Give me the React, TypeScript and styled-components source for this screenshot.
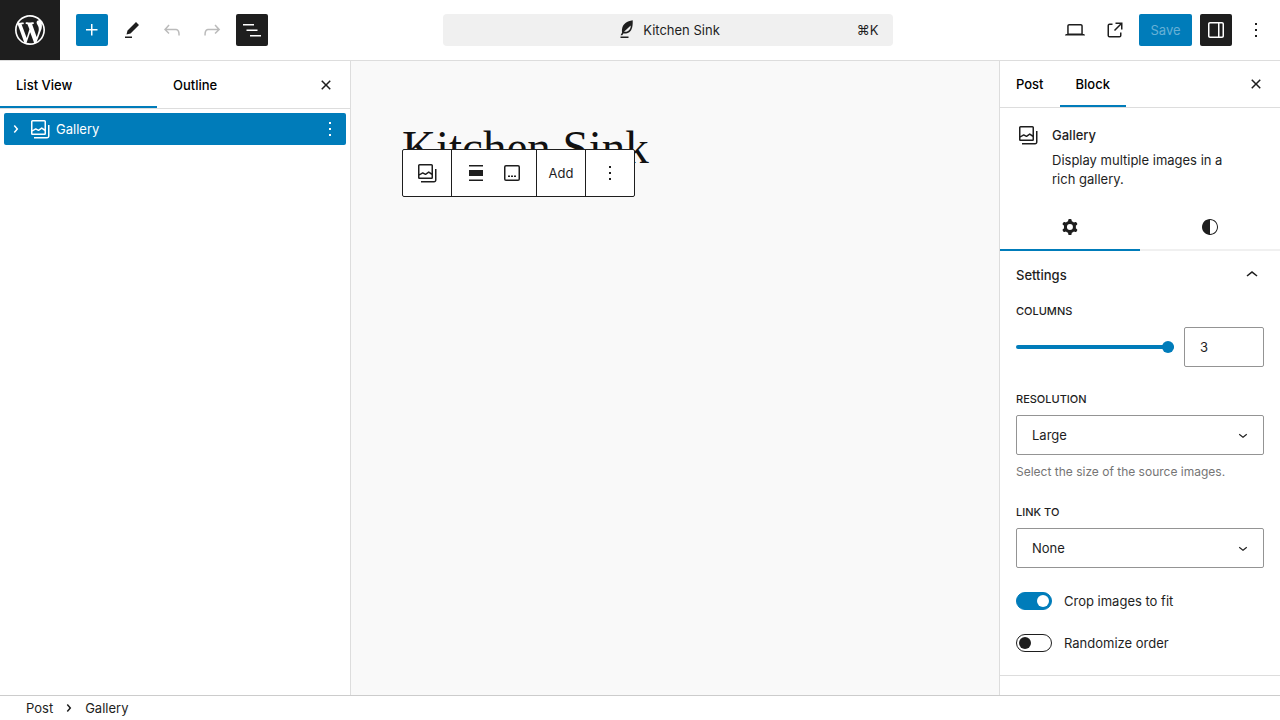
import React from "react";
import styled, { createGlobalStyle } from "styled-components";

const blue = "#007cba";
const ink = "#1e1e1e";

const GlobalStyle = createGlobalStyle`
  *, *::before, *::after { box-sizing: border-box; }
  body {
    margin: 0;
    font: 13px/20px Inter, "Liberation Sans", sans-serif;
    color: ${ink};
    background: #fff;
  }
  button, input, select { font: inherit; color: inherit; margin: 0; }
  h1, h2, p, ol { margin: 0; padding: 0; }
`;

const paths = {
  plus: "M11 12.5V17.5H12.5V12.5H17.5V11H12.5V6H11V11H6V12.5H11Z",
  edit: "m19 7-3-3-8.5 8.5-1 4 4-1L19 7Zm-7 11.5H5V20h7v-1.5Z",
  undo: "M18.3 11.7c-.6-.6-1.4-.9-2.3-.9H6.7l2.9-3.3-1.1-1-4.5 5L8.5 16l1-1-2.7-2.7H16c.5 0 .9.2 1.3.5 1 1 1 3.4 1 4.5v.3h1.5v-.2c0-1.5 0-4.3-1.5-5.7z",
  redo: "M15.6 6.5l-1.1 1 2.9 3.3H8c-.9 0-1.7.3-2.3.9-1.4 1.5-1.4 4.2-1.4 5.6v.2h1.5v-.3c0-1.1 0-3.5 1-4.5.3-.3.7-.5 1.3-.5h9.2L14.5 15l1.1 1.1 4.6-4.6-4.6-5z",
  listView: "M3 6h11v1.5H3V6Zm3.5 5.5h11V13h-11v-1.5ZM21 17H10v1.5h11V17Z",
  close: "M12 13.06l3.712 3.713 1.061-1.06L13.061 12l3.712-3.712-1.06-1.06L12 10.938 8.288 7.227l-1.061 1.06L10.939 12l-3.712 3.712 1.06 1.061L12 13.061z",
  chevronRight: "M10.8622 8.04053L14.2805 12.0286L10.8622 16.0167L9.72327 15.0405L12.3049 12.0286L9.72327 9.01672L10.8622 8.04053Z",
  chevronUp: "M6.5 12.4L12 8l5.5 4.4-.9 1.2L12 10l-4.5 3.6-1-1.2z",
  chevronDown: "M17.5 11.6L12 16l-5.5-4.4.9-1.2L12 14l4.5-3.6 1 1.2z",
  gallery: "M16.375 4.5H4.625a.125.125 0 0 0-.125.125v8.254l2.859-1.54a.75.75 0 0 1 .68-.016l2.384 1.142 2.89-2.074a.75.75 0 0 1 .874 0l2.313 1.66V4.625a.125.125 0 0 0-.125-.125Zm.125 9.398-2.75-1.975-2.813 2.02a.75.75 0 0 1-.76.067l-2.444-1.17L4.5 14.583v1.792c0 .069.056.125.125.125h11.75a.125.125 0 0 0 .125-.125v-2.477ZM4.625 3C3.728 3 3 3.728 3 4.625v11.75C3 17.273 3.728 18 4.625 18h11.75c.898 0 1.625-.727 1.625-1.625V4.625C18 3.728 17.273 3 16.375 3H4.625ZM20 8v11c0 .69-.31 1-.999 1H6v1.5h13.001c1.52 0 2.499-.982 2.499-2.5V8H20Z",
  more: "M13 19h-2v-2h2v2zm0-6h-2v-2h2v2zm0-6h-2V5h2v2z",
  align: "M19 5.5H5V4h14v1.5ZM19 20H5v-1.5h14V20ZM5 9h14v6H5V9Z",
  caption: "M6 5.5h12a.5.5 0 0 1 .5.5v12a.5.5 0 0 1-.5.5H6a.5.5 0 0 1-.5-.5V6a.5.5 0 0 1 .5-.5ZM4 6a2 2 0 0 1 2-2h12a2 2 0 0 1 2 2v12a2 2 0 0 1-2 2H6a2 2 0 0 1-2-2V6Zm4 10h2v-1.5H8V16Zm5 0h-2v-1.5h2V16Zm1 0h2v-1.5h-2V16Z",
  laptop: "M20.5 16h-.7V8c0-1.1-.9-2-2-2H6.2c-1.1 0-2 .9-2 2v8h-.7c-.8 0-1.5.7-1.5 1.5h20c0-.8-.7-1.5-1.5-1.5zM5.7 8c0-.3.2-.5.5-.5h11.6c.3 0 .5.2.5.5v7.6H5.7V8z",
  external: "M19.5 4.5h-7V6h4.44l-5.97 5.97 1.06 1.06L18 7.06v4.44h1.5v-7Zm-13 1a2 2 0 0 0-2 2v10a2 2 0 0 0 2 2h10a2 2 0 0 0 2-2v-3H17v3a.5.5 0 0 1-.5.5h-10a.5.5 0 0 1-.5-.5v-10a.5.5 0 0 1 .5-.5h3V5.5h-3Z",
  drawer: "M18 4H6c-1.1 0-2 .9-2 2v12c0 1.1.9 2 2 2h12c1.1 0 2-.9 2-2V6c0-1.1-.9-2-2-2zm-4 14.5H6c-.3 0-.5-.2-.5-.5V6c0-.3.2-.5.5-.5h8v13zm4.5-.5c0 .3-.2.5-.5.5h-2.5v-13H18c.3 0 .5.2.5.5v12z",
  cog: "M10.289 4.836A1 1 0 0111.275 4h1.306a1 1 0 01.987.836l.244 1.466c.787.26 1.503.679 2.108 1.218l1.393-.522a1 1 0 011.216.437l.653 1.13a1 1 0 01-.23 1.273l-1.148.944a6.025 6.025 0 010 2.435l1.149.946a1 1 0 01.23 1.272l-.653 1.13a1 1 0 01-1.216.437l-1.394-.522c-.605.54-1.32.958-2.108 1.218l-.244 1.466a1 1 0 01-.987.836h-1.306a1 1 0 01-.986-.836l-.244-1.466a5.995 5.995 0 01-2.108-1.218l-1.394.522a1 1 0 01-1.217-.436l-.653-1.131a1 1 0 01.23-1.272l1.149-.946a6.026 6.026 0 010-2.435l-1.148-.944a1 1 0 01-.23-1.272l.653-1.131a1 1 0 011.217-.437l1.393.522a5.994 5.994 0 012.108-1.218l.244-1.466zM14.929 12a3 3 0 11-6 0 3 3 0 016 0z",
  styles: "M12 4c-4.4 0-8 3.6-8 8v.1c0 4.1 3.2 7.5 7.2 7.9h.8c4.4 0 8-3.6 8-8s-3.6-8-8-8zm0 15V5c3.900 0 7 3.100 7 7s-3.100 7-7 7z",
  quill: "M17.7 2.2C12 3 7.8 5.6 7 11.2c-.2 1.200-.1 2.300.1 3.200L5.600 17.300h1.700l1-1.900c1.800.3 4.300.1 6-1.200 3-2.300 3.600-6.700 3.400-12zM9 13.800l6.700-6.200c.2 2.300-.9 4.400-2.600 5.300-1.200.7-2.600 1-4.100.9zM5.500 18.500h8V20h-8z",
  wordpress: "M20 10c0-5.51-4.49-10-10-10C4.48 0 0 4.49 0 10c0 5.52 4.48 10 10 10 5.51 0 10-4.48 10-10zM7.78 15.37L4.37 6.22c.55-.02 1.17-.08 1.17-.08.5-.06.44-1.13-.06-1.11 0 0-1.45.11-2.37.11-.18 0-.37 0-.58-.01C4.12 2.69 6.87 1.11 10 1.11c2.33 0 4.45.87 6.05 2.34-.68-.11-1.65.39-1.65 1.58 0 .74.45 1.36.9 2.1.35.61.55 1.36.55 2.46 0 1.49-1.4 5-1.4 5l-3.03-8.37c.54-.02.82-.17.82-.17.5-.05.44-1.25-.06-1.22 0 0-1.44.12-2.38.12-.87 0-2.33-.12-2.33-.12-.5-.03-.56 1.2-.06 1.22l.92.08 1.26 3.41zM17.41 10c.24-.64.74-1.87.43-4.25.7 1.29 1.05 2.71 1.05 4.25 0 3.29-1.73 6.24-4.4 7.78.97-2.59 1.94-5.2 2.92-7.78zM6.1 18.09C3.12 16.65 1.11 13.53 1.11 10c0-1.3.23-2.48.72-3.59C3.25 10.3 4.67 14.2 6.1 18.09zm4.03-6.63l2.58 6.98c-.86.29-1.76.45-2.71.45-.79 0-1.57-.11-2.29-.33.81-2.38 1.62-4.74 2.42-7.1z",
};

const Svg = styled.svg`
  display: block;
  flex: none;
  fill: currentColor;
`;

function Icon({ name, size = 24, viewBox = "0 0 24 24" }: { name: keyof typeof paths; size?: number; viewBox?: string }) {
  return (
    <Svg width={size} height={size} viewBox={viewBox} aria-hidden="true">
      <path fillRule="evenodd" clipRule="evenodd" d={paths[name]} />
    </Svg>
  );
}

const Page = styled.div`
  display: flex;
  flex-direction: column;
  min-height: 100vh;
`;

const Header = styled.header`
  display: grid;
  grid-template-columns: auto minmax(0, 1fr) auto;
  align-items: center;
  height: 61px;
  border-bottom: 1px solid #ddd;
`;

const Tools = styled.div`
  display: flex;
  align-items: center;
  gap: 8px;
  padding-right: 8px;
`;

const HomeLink = styled.a`
  display: grid;
  place-items: center;
  width: 60px;
  height: 60px;
  margin-right: 8px;
  background: ${ink};
  color: #fff;
`;

const IconButton = styled.button<{ $fill?: string }>`
  display: grid;
  place-items: center;
  flex: none;
  width: 32px;
  height: 32px;
  padding: 0;
  border: 0;
  border-radius: 2px;
  background: ${(p) => p.$fill ?? "transparent"};
  color: ${(p) => (p.$fill ? "#fff" : "inherit")};
  &:disabled { color: #bbb; }
`;

const SaveButton = styled.button`
  width: 53px;
  height: 32px;
  padding: 0;
  border: 0;
  border-radius: 2px;
  background: ${blue};
  &:disabled { color: #66b0d6; }
`;

const CommandBar = styled.button`
  display: grid;
  grid-template-columns: 1fr auto 1fr;
  align-items: center;
  justify-self: center;
  width: 100%;
  max-width: 450px;
  height: 32px;
  padding: 0 14px;
  border: 0;
  border-radius: 4px;
  background: #f0f0f0;
`;

const DocumentName = styled.span`
  grid-column: 2;
  display: flex;
  align-items: center;
  gap: 4px;
`;

const Shortcut = styled.kbd`
  font-family: inherit;
  text-align: right;
`;

const Workspace = styled.div`
  display: flex;
  flex: 1;
`;

const ListPanel = styled.aside`
  flex: none;
  width: 351px;
  border-right: 1px solid #ddd;
`;

const Inspector = styled.aside`
  flex: none;
  width: 281px;
  border-left: 1px solid #ddd;
`;

const TabBar = styled.div<{ $height: number }>`
  display: flex;
  align-items: center;
  height: ${(p) => p.$height}px;
  padding-right: 8px;
  border-bottom: 1px solid #ddd;
`;

const Tab = styled.button<{ $active?: boolean; $width?: string }>`
  align-self: stretch;
  width: ${(p) => p.$width ?? "auto"};
  padding: 0 16px;
  border: 0;
  background: none;
  box-shadow: ${(p) => (p.$active ? `inset 0 -2px ${blue}` : "none")};
  font-weight: 500;
  text-align: left;
  color: #000;
`;

const Spacer = styled.div`
  flex: 1;
`;

const BlockRow = styled.div`
  display: flex;
  align-items: center;
  height: 32px;
  margin: 4px;
  border-radius: 2px;
  background: ${blue};
  color: #fff;
`;

const BlockName = styled.button`
  display: flex;
  align-items: center;
  flex: 1;
  gap: 4px;
  padding: 0;
  border: 0;
  background: none;
`;

const Canvas = styled.main`
  flex: 1;
  min-width: 0;
  padding: 52px 51px;
  background: #f9f9f9;
`;

const TitleArea = styled.div`
  position: relative;
`;

const PostTitle = styled.h1`
  font: 400 47px/68px "Liberation Serif", serif;
  color: #111;
`;

const BlockToolbar = styled.div`
  position: absolute;
  top: 36px;
  left: 0;
  display: flex;
  height: 48px;
  border: 1px solid ${ink};
  border-radius: 2px;
  background: #fff;
`;

const ToolGroup = styled.div`
  display: flex;
  padding: 0 6px;
  & + & { border-left: 1px solid ${ink}; }
`;

const ToolButton = styled.button`
  display: grid;
  place-items: center;
  width: 36px;
  padding: 0;
  border: 0;
  background: none;
`;

const BlockCard = styled.section`
  display: flex;
  gap: 12px;
  padding: 15px 16px 0;
`;

const CardTitle = styled.h2`
  font-size: 13px;
  font-weight: 500;
  line-height: 24px;
`;

const CardText = styled.p`
  max-width: 184px;
  line-height: 19px;
  padding-top: 4px;
`;

const ViewTabs = styled.div`
  display: grid;
  grid-template-columns: 1fr 1fr;
  height: 48px;
  margin-top: 14px;
  box-shadow: inset 0 -2px #f0f0f0;
`;

const ViewTab = styled.button<{ $active?: boolean }>`
  display: grid;
  place-items: center;
  padding: 0;
  border: 0;
  background: none;
  box-shadow: ${(p) => (p.$active ? `inset 0 -2px ${blue}` : "none")};
`;

const Panel = styled.section`
  padding: 0 16px 23px;
  border-bottom: 1px solid #ddd;
`;

const PanelToggle = styled.button`
  display: flex;
  align-items: center;
  justify-content: space-between;
  width: 100%;
  height: 48px;
  margin-bottom: 4px;
  padding: 0;
  border: 0;
  background: none;
  font-weight: 500;
`;

const Field = styled.div`
  display: flex;
  flex-direction: column;
  gap: 8px;
  margin-bottom: 24px;
`;

const Label = styled.label`
  padding-top: 1px;
  font-size: 11px;
  font-weight: 500;
  line-height: 15px;
  text-transform: uppercase;
`;

const Hint = styled.p`
  font-size: 12px;
  line-height: 17px;
  color: #757575;
`;

const RangeRow = styled.div`
  display: flex;
  align-items: center;
  gap: 10px;
`;

const Range = styled.input`
  flex: 1;
  min-width: 0;
  height: 12px;
  appearance: none;
  background: none;
  &::-webkit-slider-runnable-track {
    height: 4px;
    border-radius: 2px;
    background: ${blue};
  }
  &::-webkit-slider-thumb {
    appearance: none;
    width: 12px;
    height: 12px;
    margin-top: -4px;
    border-radius: 50%;
    background: ${blue};
  }
`;

const NumberBox = styled.input`
  width: 80px;
  height: 40px;
  padding: 0 15px;
  border: 1px solid #949494;
  border-radius: 2px;
  background: #fff;
`;

const SelectWrap = styled.div`
  display: grid;
  align-items: center;
  & > * { grid-area: 1 / 1; }
  & > svg {
    justify-self: end;
    margin-right: 12px;
    pointer-events: none;
  }
`;

const Select = styled.select`
  width: 100%;
  height: 40px;
  padding: 0 15px;
  appearance: none;
  border: 1px solid #949494;
  border-radius: 2px;
  background: #fff;
`;

const SwitchRow = styled.label`
  display: flex;
  align-items: center;
  gap: 12px;
  height: 18px;
  & + & { margin-top: 24px; }
`;

const Switch = styled.input`
  flex: none;
  display: flex;
  align-items: center;
  width: 36px;
  height: 18px;
  padding: 0 2px;
  appearance: none;
  border: 1px solid ${ink};
  border-radius: 9px;
  background: #fff;
  &::before {
    content: "";
    width: 12px;
    height: 12px;
    border-radius: 50%;
    background: ${ink};
  }
  &:checked {
    justify-content: flex-end;
    border-color: ${blue};
    background: ${blue};
  }
  &:checked::before { background: #fff; }
`;

const Footer = styled.footer`
  height: 25px;
  padding: 0 18px;
  border-top: 1px solid #ccc;
`;

const Crumbs = styled.ol`
  display: flex;
  align-items: center;
  height: 24px;
  list-style: none;
  & > li { display: flex; align-items: center; }
`;

const Crumb = styled.button`
  padding: 0 8px;
  border: 0;
  background: none;
`;

function SelectField({ id, label, value, hint }: { id: string; label: string; value: string; hint?: string }) {
  return (
    <Field>
      <Label htmlFor={id}>{label}</Label>
      <SelectWrap>
        <Select id={id} defaultValue={value}>
          <option>{value}</option>
        </Select>
        <Icon name="chevronDown" size={18} />
      </SelectWrap>
      {hint && <Hint>{hint}</Hint>}
    </Field>
  );
}

export default function App() {
  return (
    <Page>
      <GlobalStyle />
      <Header>
        <Tools>
          <HomeLink href="#" aria-label="View posts">
            <Icon name="wordpress" size={36} viewBox="-2 -2 24 24" />
          </HomeLink>
          <IconButton $fill={blue} aria-label="Add block"><Icon name="plus" /></IconButton>
          <IconButton aria-label="Tools"><Icon name="edit" /></IconButton>
          <IconButton disabled aria-label="Undo"><Icon name="undo" /></IconButton>
          <IconButton disabled aria-label="Redo"><Icon name="redo" /></IconButton>
          <IconButton $fill={ink} aria-label="Document overview"><Icon name="listView" /></IconButton>
        </Tools>
        <CommandBar>
          <DocumentName><Icon name="quill" />Kitchen Sink</DocumentName>
          <Shortcut>⌘K</Shortcut>
        </CommandBar>
        <Tools>
          <IconButton aria-label="Preview"><Icon name="laptop" /></IconButton>
          <IconButton aria-label="View post"><Icon name="external" /></IconButton>
          <SaveButton disabled>Save</SaveButton>
          <IconButton $fill={ink} aria-label="Settings"><Icon name="drawer" /></IconButton>
          <IconButton aria-label="Options"><Icon name="more" /></IconButton>
        </Tools>
      </Header>

      <Workspace>
        <ListPanel>
          <TabBar $height={48}>
            <Tab $active $width="157px">List View</Tab>
            <Tab>Outline</Tab>
            <Spacer />
            <IconButton aria-label="Close list"><Icon name="close" /></IconButton>
          </TabBar>
          <BlockRow>
            <Icon name="chevronRight" />
            <BlockName><Icon name="gallery" />Gallery</BlockName>
            <IconButton aria-label="Gallery options"><Icon name="more" /></IconButton>
          </BlockRow>
        </ListPanel>

        <Canvas>
          <TitleArea>
            <PostTitle>Kitchen Sink</PostTitle>
            <BlockToolbar role="toolbar">
              <ToolGroup>
                <ToolButton aria-label="Gallery"><Icon name="gallery" /></ToolButton>
              </ToolGroup>
              <ToolGroup>
                <ToolButton aria-label="Align"><Icon name="align" /></ToolButton>
                <ToolButton aria-label="Caption"><Icon name="caption" /></ToolButton>
              </ToolGroup>
              <ToolGroup><ToolButton>Add</ToolButton></ToolGroup>
              <ToolGroup>
                <ToolButton aria-label="Options"><Icon name="more" /></ToolButton>
              </ToolGroup>
            </BlockToolbar>
          </TitleArea>
        </Canvas>

        <Inspector>
          <TabBar $height={47}>
            <Tab>Post</Tab>
            <Tab $active>Block</Tab>
            <Spacer />
            <IconButton aria-label="Close settings"><Icon name="close" /></IconButton>
          </TabBar>
          <BlockCard>
            <Icon name="gallery" />
            <div>
              <CardTitle>Gallery</CardTitle>
              <CardText>Display multiple images in a rich gallery.</CardText>
            </div>
          </BlockCard>
          <ViewTabs>
            <ViewTab $active aria-label="Settings"><Icon name="cog" /></ViewTab>
            <ViewTab aria-label="Styles"><Icon name="styles" /></ViewTab>
          </ViewTabs>
          <Panel>
            <PanelToggle>Settings<Icon name="chevronUp" /></PanelToggle>
            <Field>
              <Label htmlFor="columns">Columns</Label>
              <RangeRow>
                <Range id="columns" type="range" min={1} max={3} defaultValue={3} />
                <NumberBox aria-label="Columns value" defaultValue="3" />
              </RangeRow>
            </Field>
            <SelectField id="resolution" label="Resolution" value="Large" hint="Select the size of the source images." />
            <SelectField id="link" label="Link to" value="None" />
            <SwitchRow><Switch type="checkbox" defaultChecked />Crop images to fit</SwitchRow>
            <SwitchRow><Switch type="checkbox" />Randomize order</SwitchRow>
          </Panel>
        </Inspector>
      </Workspace>

      <Footer>
        <Crumbs>
          <li><Crumb>Post</Crumb><Icon name="chevronRight" size={16} viewBox="4 4 16 16" /></li>
          <li><Crumb>Gallery</Crumb></li>
        </Crumbs>
      </Footer>
    </Page>
  );
}
